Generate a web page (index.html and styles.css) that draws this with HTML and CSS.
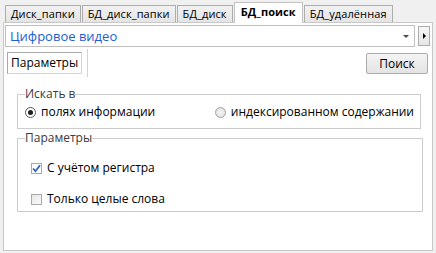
FILE: index.html
```html
<!DOCTYPE html>
<html lang="ru">
<head>
    <meta charset="UTF-8">
    <title>БД_поиск</title>
    <link rel="stylesheet" href="styles.css">
</head>
<body>
    <div class="tabs">
        <div class="tab">Диск_папки</div>
        <div class="tab">БД_диск_папки</div>
        <div class="tab">БД_диск</div>
        <div class="tab active">БД_поиск</div>
        <div class="tab">БД_удалённая</div>
    </div>
    <main class="panel">
        <div class="combo-row">
            <div class="combo">
                <span class="combo-text">Цифровое видео</span>
                <span class="combo-arrow"></span>
            </div>
            <div class="side-btn"><span class="side-arrow"></span></div>
        </div>
        <div class="toolbar">
            <div class="subtab">Параметры</div>
            <div class="sep"></div>
            <button class="btn">Поиск</button>
        </div>
        <fieldset class="group group-where">
            <legend>Искать в</legend>
            <div class="radios">
                <label class="opt"><span class="radio checked"></span>полях информации</label>
                <label class="opt"><span class="radio"></span>индексированном содержании</label>
            </div>
        </fieldset>
        <fieldset class="group group-params">
            <legend>Параметры</legend>
            <label class="opt check-opt"><span class="check checked">
                <svg width="9" height="9" viewBox="0 0 9 9"><path d="M1 4.5 L3.5 7.2 L8 1.2" fill="none" stroke="#2b62c9" stroke-width="1.8"/></svg>
            </span>С учётом регистра</label>
            <label class="opt check-opt"><span class="check"></span>Только целые слова</label>
        </fieldset>
    </main>
</body>
</html>
```

FILE: styles.css
```css
* {
    margin: 0;
    padding: 0;
    box-sizing: border-box;
}

body {
    width: 436px;
    height: 253px;
    background-color: #f0f0f0;
    font-family: "Open Sans", "Noto Sans", sans-serif;
    font-size: 12px;
    color: #000000;
    overflow: hidden;
}

.tabs {
    display: flex;
    align-items: flex-end;
    height: 22px;
    padding-left: 5px;
    position: relative;
    z-index: 1;
}

.tab {
    height: 17px;
    line-height: 15px;
    padding: 0 5px;
    margin-right: 1px;
    border: solid 1px #adadad;
    border-bottom: none;
    background: linear-gradient(#f2f2f2, #e4e4e4);
    font-size: 11px;
    letter-spacing: 0.1px;
    white-space: nowrap;
}

.tab.active {
    height: 21px;
    line-height: 18px;
    margin-bottom: -1px;
    padding: 0 6px;
    background: #ffffff;
    font-weight: 700;
    border-color: #c2c2c2;
}

.panel {
    margin: 0 3px;
    height: 229px;
    background-color: #ffffff;
    border: solid 1px #c8c8c8;
}

.combo-row {
    display: flex;
    align-items: center;
    gap: 3px;
    padding: 2px 0 0 1px;
}

.combo {
    width: 410px;
    height: 22px;
    border: solid 1px #bfbfbf;
    display: flex;
    align-items: center;
    justify-content: space-between;
    padding: 0 5px 0 4px;
}

.combo-text {
    color: #1a5ed6;
    font-size: 13px;
    line-height: 18px;
}

.combo-arrow {
    width: 0;
    height: 0;
    border-left: 3px solid transparent;
    border-right: 3px solid transparent;
    border-top: 3px solid #4a4a4a;
}

.side-btn {
    width: 12px;
    height: 20px;
    border: solid 1px #acacac;
    background: linear-gradient(#f6f6f6, #e6e6e6);
    display: flex;
    align-items: center;
    justify-content: center;
}

.side-arrow {
    width: 0;
    height: 0;
    border-top: 3px solid transparent;
    border-bottom: 3px solid transparent;
    border-left: 3px solid #000000;
}

.toolbar {
    display: flex;
    align-items: center;
    height: 28px;
    margin-top: 2px;
    padding: 0 4px 0 3px;
}

.subtab {
    width: 75px;
    height: 22px;
    line-height: 20px;
    padding-left: 3px;
    border: solid 1px #a8a8a8;
    border-bottom-color: #d4d4d4;
    border-right-color: #d4d4d4;
}

.sep {
    width: 1px;
    height: 28px;
    margin-left: 5px;
    background-color: #d4d4d4;
}

.btn {
    margin-left: auto;
    width: 62px;
    height: 21px;
    border: solid 1px #acacac;
    border-radius: 2px;
    background: linear-gradient(#f4f4f4, #e3e3e3);
    font-family: inherit;
    font-size: 12px;
    color: #000000;
}

.group {
    border: solid 1px #cccccc;
    margin-left: 13px;
    padding: 0 4px;
}

.group legend {
    margin-left: 3px;
    padding: 0;
    color: #3a3a3a;
    line-height: 14px;
}

.group-where {
    width: 404px;
    height: 42px;
    margin-top: 10px;
}

.radios {
    display: flex;
    justify-content: space-between;
    padding: 3px 2px 0 3px;
}

.opt {
    display: flex;
    align-items: center;
    gap: 5px;
    line-height: 16px;
    color: #000000;
}

.radio {
    width: 11px;
    height: 11px;
    border-radius: 50%;
    border: solid 1px #a2a2a2;
    background: radial-gradient(#f6f6f6, #dcdcdc);
    display: flex;
    align-items: center;
    justify-content: center;
}

.radio.checked {
    border-color: #5a5a5a;
    background: #ffffff;
}

.radio.checked::after {
    content: "";
    width: 5px;
    height: 5px;
    border-radius: 50%;
    background-color: #1e1e1e;
}

.group-params {
    width: 406px;
    height: 81px;
    margin-top: 2px;
    padding-top: 15px;
}

.check-opt {
    padding-left: 9px;
    margin-bottom: 15px;
}

.check {
    width: 11px;
    height: 11px;
    border: solid 1px #a8a8a8;
    background: linear-gradient(135deg, #e6e6e6, #fafafa);
    display: flex;
    align-items: center;
    justify-content: center;
}

.check.checked {
    background: #ffffff;
}
```
